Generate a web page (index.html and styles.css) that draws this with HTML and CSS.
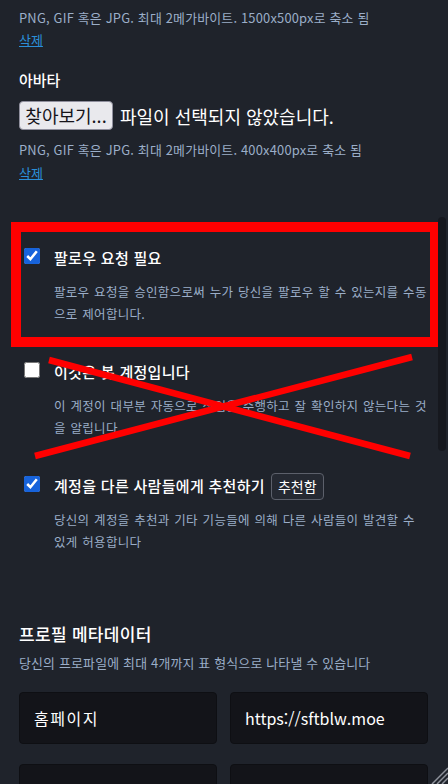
FILE: index.html
```html
<html lang="ko">
<head>
    <title>프로필 설정</title>
    <meta charset="utf-8">
    <link rel="stylesheet" href="styles.css">
</head>
<body>
<div class="page">
    <p class="hint">PNG, GIF 혹은 JPG. 최대 2메가바이트. 1500x500px로 축소 됨</p>
    <a href="#" class="link">삭제</a>

    <div class="field-label">아바타</div>
    <div class="file-row">
        <span class="file-btn">찾아보기...</span>
        <span class="file-name">파일이 선택되지 않았습니다.</span>
    </div>
    <p class="hint hint-gap">PNG, GIF 혹은 JPG. 최대 2메가바이트. 400x400px로 축소 됨</p>
    <a href="#" class="link link-gap">삭제</a>

    <div class="checks">
        <div class="check-item">
            <label class="check-row">
                <input type="checkbox" checked>
                <span class="check-label">팔로우 요청 필요</span>
            </label>
            <p class="check-desc">팔로우 요청을 승인함으로써 누가 당신을 팔로우 할 수 있는지를 수동<br>으로 제어합니다.</p>
        </div>
        <div class="check-item">
            <label class="check-row">
                <input type="checkbox">
                <span class="check-label">이것은 봇 계정입니다</span>
            </label>
            <p class="check-desc">이 계정이 대부분 자동으로 작업을 수행하고 잘 확인하지 않는다는 것<br>을 알립니다.</p>
        </div>
        <div class="check-item">
            <label class="check-row">
                <input type="checkbox" checked>
                <span class="check-label">계정을 다른 사람들에게 추천하기</span>
                <span class="badge">추천함</span>
            </label>
            <p class="check-desc">당신의 계정을 추천과 기타 기능들에 의해 다른 사람들이 발견할 수<br>있게 허용합니다</p>
        </div>
    </div>

    <div class="meta">
        <h4>프로필 메타데이터</h4>
        <p class="hint meta-hint">당신의 프로파일에 최대 4개까지 표 형식으로 나타낼 수 있습니다</p>
        <div class="meta-grid">
            <input class="meta-input meta-name" value="홈페이지">
            <input class="meta-input" value="https://sftblw.moe">
            <input class="meta-input" value="blog">
            <input class="meta-input" value="">
        </div>
    </div>
</div>

<!-- annotation marks drawn over the screenshot -->
<div class="mark-box"></div>
<svg class="mark-cross" width="448" height="784" viewBox="0 0 448 784">
    <line x1="49" y1="360" x2="410" y2="456" stroke="#ff0000" stroke-width="6.5"/>
    <line x1="35" y1="456" x2="412" y2="357" stroke="#ff0000" stroke-width="6.5"/>
</svg>

<div class="scroll-thumb"></div>
<svg class="resizer" width="17" height="20" viewBox="0 0 17 20">
    <line x1="1" y1="20" x2="17" y2="4" stroke="#8e929b" stroke-width="1.5"/>
    <line x1="6" y1="20" x2="17" y2="9" stroke="#8e929b" stroke-width="1.5"/>
    <line x1="11" y1="20" x2="17" y2="14" stroke="#8e929b" stroke-width="1.5"/>
</svg>
</body>
</html>
```

FILE: styles.css
```css
html {
    background-color: #1f232b;
    overflow: hidden;
}

body {
    margin: 0;
    position: relative;
    font-family: "Noto Sans CJK KR", "Noto Sans", sans-serif;
    color: #ffffff;
}

.page {
    padding: 9px 20px 0 19px;
}

.hint {
    margin: 0;
    font-size: 12.9px;
    line-height: 18px;
    color: #9baec8;
    letter-spacing: 0.2px;
}

.hint-gap {
    margin-top: 11px;
}

.link {
    display: block;
    width: fit-content;
    margin-top: 4px;
    font-size: 13px;
    line-height: 18px;
    color: #2b8fd8;
}

.link-gap {
    margin-top: 5px;
}

.field-label {
    margin-top: 21px;
    font-size: 15px;
    line-height: 20px;
    font-weight: 500;
}

.file-row {
    display: flex;
    align-items: center;
    gap: 7px;
    margin-top: 11px;
}

.file-btn {
    box-sizing: border-box;
    width: 94px;
    height: 29px;
    line-height: 27px;
    text-align: center;
    font-size: 18px;
    color: #15141a;
    background: #e9e9ed;
    border: 1px solid #8f8f9d;
    border-radius: 4px;
}

.file-name {
    font-size: 18px;
    line-height: 22px;
}

.checks {
    margin-top: 62px;
}

.check-item {
    margin-bottom: 34px;
}

.check-item:last-child {
    margin-bottom: 0;
}

.check-row {
    display: flex;
    align-items: center;
    min-height: 28px;
}

.check-row input {
    align-self: flex-start;
    width: 16px;
    height: 16px;
    margin: 3.5px 14px 0 5px;
    accent-color: #1763db;
}

.check-label {
    font-size: 15px;
    line-height: 20px;
    font-weight: 500;
    letter-spacing: 0.3px;
}

.badge {
    box-sizing: border-box;
    height: 27px;
    margin-left: 6px;
    padding: 0 6px;
    font-size: 14px;
    line-height: 25px;
    background: #252932;
    border: 1px solid #5c606b;
    border-radius: 4px;
}

.check-desc {
    margin: 9px 0 0 35px;
    font-size: 12.5px;
    line-height: 21.6px;
    color: #9baec8;
    letter-spacing: 0.3px;
    word-spacing: 0.9px;
    white-space: nowrap;
}

.meta {
    margin-top: 70px;
}

.meta h4 {
    margin: 0;
    font-size: 17px;
    line-height: 22px;
    font-weight: 500;
    letter-spacing: 0.3px;
}

.meta-hint {
    margin-top: 9px;
}

.meta-grid {
    display: grid;
    grid-template-columns: 1fr 1fr;
    column-gap: 13px;
    row-gap: 20px;
    margin-top: 20px;
}

.meta-input {
    box-sizing: border-box;
    width: 100%;
    height: 52px;
    padding: 0 14px;
    font-family: inherit;
    font-size: 16px;
    color: #ffffff;
    background: #131419;
    border: 1px solid #0e0f13;
    border-radius: 4px;
    outline: none;
}

.meta-name {
    letter-spacing: 1.5px;
}

.mark-box {
    position: absolute;
    left: 11px;
    top: 222px;
    width: 429px;
    height: 125px;
    box-sizing: border-box;
    border: 10px solid #ff0000;
    pointer-events: none;
}

.mark-cross {
    position: absolute;
    left: 0;
    top: 0;
    pointer-events: none;
}

.scroll-thumb {
    position: fixed;
    left: 438px;
    top: 217px;
    width: 8px;
    height: 234px;
    border-radius: 4px;
    background: #16181e;
}

.resizer {
    position: fixed;
    right: 0;
    bottom: 0;
}
```
